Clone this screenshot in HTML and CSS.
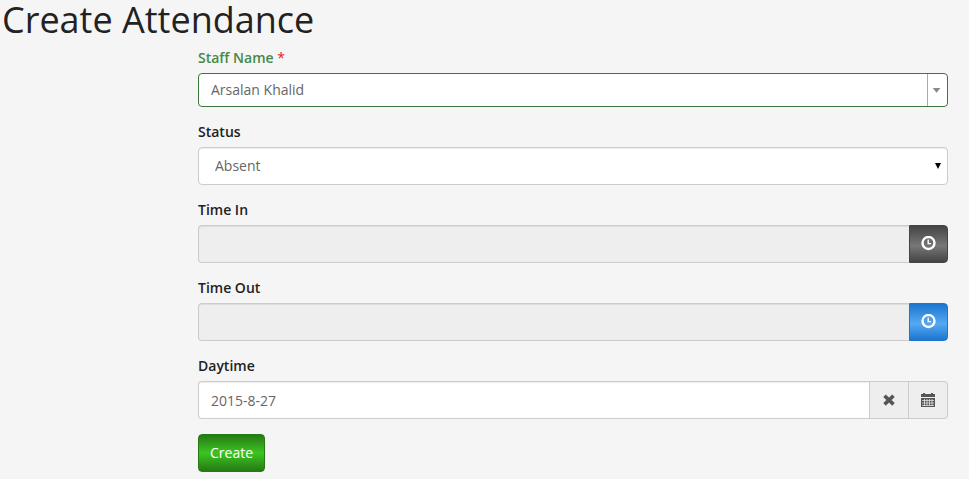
FILE: index.html
```
<!DOCTYPE html>
<html lang="en">
<head>
  <meta charset="UTF-8">
  <meta name="viewport" content="width=device-width, initial-scale=1.0">
  <title>Create Attendance</title>
  <link rel="stylesheet" href="styles.css">
</head>
<body>
  <h1>Create Attendance</h1>

  <form class="attendance-form">
    <div class="form-group has-success">
      <label for="staff">Staff Name <span class="required">*</span></label>
      <div class="select-box combo">
        <select id="staff" required>
          <option>Arsalan Khalid</option>
        </select>
        <svg class="combo-arrow" width="20" height="32" viewBox="0 0 20 32" aria-hidden="true">
          <path d="M5 14h8l-4 5z" fill="#888"/>
        </svg>
      </div>
    </div>

    <div class="form-group">
      <label for="status">Status</label>
      <div class="select-box">
        <select id="status" class="status-select">
          <option>Absent</option>
          <option>Present</option>
        </select>
        <svg class="status-arrow" width="8" height="6" viewBox="0 0 8 6" aria-hidden="true">
          <path d="M1 0h6L4 6z" fill="#000"/>
        </svg>
      </div>
    </div>

    <div class="form-group">
      <label for="timeIn">Time In</label>
      <div class="input-group">
        <input type="text" id="timeIn" readonly>
        <button type="button" class="btn-addon btn-dark" aria-label="Pick time in">
          <svg width="16" height="16" viewBox="0 0 16 16" fill="none" stroke="#fff">
            <circle cx="7.5" cy="7" r="6" stroke-width="2.4"/>
            <path d="M7.2 3.6v4H10" stroke-width="1.4"/>
          </svg>
        </button>
      </div>
    </div>

    <div class="form-group">
      <label for="timeOut">Time Out</label>
      <div class="input-group">
        <input type="text" id="timeOut" readonly>
        <button type="button" class="btn-addon btn-blue" aria-label="Pick time out">
          <svg width="16" height="16" viewBox="0 0 16 16" fill="none" stroke="#fff">
            <circle cx="7.5" cy="7" r="6" stroke-width="2.4"/>
            <path d="M7.2 3.6v4H10" stroke-width="1.4"/>
          </svg>
        </button>
      </div>
    </div>

    <div class="form-group">
      <label for="daytime">Daytime</label>
      <div class="input-group">
        <input type="text" id="daytime" value="2015-8-27">
        <button type="button" class="btn-addon btn-plain" aria-label="Clear date">
          <svg width="14" height="14" viewBox="0 0 14 14">
            <path d="M2.5 2.8l9 8.6M11.5 2.8l-9 8.6" stroke="#555" stroke-width="3.6"/>
          </svg>
        </button>
        <button type="button" class="btn-addon btn-plain" aria-label="Pick date">
          <svg width="14" height="14" viewBox="0 0 14 14">
            <path d="M0 1h2V0h2v1h6V0h2v1h2v3H0z" fill="#555"/>
            <path d="M0 5h14v9H0z" fill="#555"/>
            <path d="M1 7.5h12M1 10h12M1 12.5h12M3.5 6v7M6 6v7M8.5 6v7M11 6v7" stroke="#eee" stroke-width=".7"/>
          </svg>
        </button>
      </div>
    </div>

    <button type="submit" class="btn-create">Create</button>
  </form>
</body>
</html>
```

FILE: styles.css
```
* {
  box-sizing: border-box;
}

body {
  margin: 0;
  background-color: #f5f5f5;
  color: #222;
  font-family: "Open Sans", "Noto Sans", sans-serif;
  font-size: 14px;
  line-height: 20px;
}

h1 {
  margin: 0;
  padding-left: 2px;
  font-size: 36px;
  font-weight: 400;
  line-height: 40px;
}

.attendance-form {
  margin-left: 198px;
  margin-right: 21px;
  padding-top: 8px;
}

.form-group {
  margin-bottom: 15px;
}

label {
  display: block;
  margin-bottom: 5px;
  font-weight: 600;
}

.has-success label {
  color: #468847;
}

label .required {
  color: #e02222;
  font-weight: 400;
}

input,
select,
button {
  font: inherit;
}

input,
select {
  display: block;
  width: 100%;
  height: 38px;
  padding: 8px 12px;
  border: 1px solid #ccc;
  border-radius: 4px;
  background-color: #fff;
  color: #666;
  box-shadow: inset 0 1px 1px rgba(0, 0, 0, 0.075);
}

select {
  appearance: none;
}

input[readonly] {
  background-color: #eee;
}

.select-box {
  position: relative;
}

.combo select {
  height: 34px;
  padding: 5px 12px;
  border-color: #3c763d;
  box-shadow: none;
}

.combo-arrow {
  position: absolute;
  top: 1px;
  right: 1px;
  border-left: 1px solid #aaa;
  pointer-events: none;
}

.status-select {
  padding: 8px 16px;
}

.status-arrow {
  position: absolute;
  top: 16px;
  right: 6px;
  pointer-events: none;
}

.input-group {
  display: flex;
}

.input-group input {
  flex: 1;
  min-width: 0;
  border-right: none;
  border-radius: 4px 0 0 4px;
}

button {
  display: flex;
  align-items: center;
  justify-content: center;
  height: 38px;
  padding: 0 11px;
  border: 1px solid transparent;
  cursor: pointer;
}

.btn-addon {
  width: 39px;
  padding: 0;
}

.btn-addon:last-child {
  border-radius: 0 4px 4px 0;
}

.btn-dark {
  border-color: #444;
  background: linear-gradient(#444, #777 55%, #444);
}

.btn-blue {
  border-color: #1c75cf;
  background: linear-gradient(#1c75cf, #55a9f2 55%, #1c75cf);
}

.btn-plain {
  width: 40px;
  border-color: #ccc;
  background-color: #eee;
}

.btn-plain:last-child {
  width: 39px;
  border-left: none;
}

.btn-create {
  border-color: #257a14;
  border-radius: 4px;
  background: linear-gradient(#257a14, #3dc422 50%, #257a14);
  color: #fff;
}
```
